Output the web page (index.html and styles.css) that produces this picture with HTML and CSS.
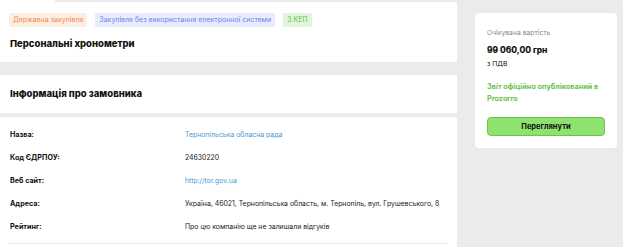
FILE: index.html
```html
<!DOCTYPE html>
<html lang="uk">
<head>
    <meta charset="UTF-8">
    <meta name="viewport" content="width=device-width, initial-scale=1.0">
    <title>Персональні хронометри</title>
    <link rel="stylesheet" href="styles.css">
</head>
<body>

    <div class="page">
        <div class="main-col">
            <div class="tabline"><div class="tab-active"></div></div>

            <div class="card summary">
                <div class="tags">
                    <span class="tag tag-orange">Державна закупівля</span>
                    <span class="tag tag-blue">Закупівля без використання електронної системи</span>
                    <span class="tag tag-green">З КЕП</span>
                </div>
                <h1 class="title">Персональні хронометри</h1>
            </div>

            <div class="card section-head">
                <h2>Інформація про замовника</h2>
            </div>

            <div class="card details">
                <div class="row">
                    <div class="label">Назва:</div>
                    <div class="value"><a href="#">Тернопільська обласна рада</a></div>
                </div>
                <div class="row">
                    <div class="label">Код ЄДРПОУ:</div>
                    <div class="value">24630220</div>
                </div>
                <div class="row">
                    <div class="label">Веб сайт:</div>
                    <div class="value"><a href="#">http://tor.gov.ua</a></div>
                </div>
                <div class="row">
                    <div class="label">Адреса:</div>
                    <div class="value">Україна, 46021, Тернопільська область, м. Тернопіль, вул. Грушевського, 8</div>
                </div>
                <div class="row">
                    <div class="label">Рейтинг:</div>
                    <div class="value">Про цю компанію ще не залишали відгуків</div>
                </div>
                <div class="divider"></div>
            </div>
        </div>

        <div class="side-col">
            <div class="card price-card">
                <div class="price-label">Очікувана вартість</div>
                <div class="price">99 060,00 грн</div>
                <div class="vat">з ПДВ</div>
                <div class="report">Звіт офіційно опублікований в Prozorro</div>
                <button class="view-btn">Переглянути</button>
            </div>
        </div>
    </div>

</body>
</html>
```

FILE: styles.css
```css
body {
    font-family: Inter, "Noto Sans", sans-serif;
    margin: 0;
    padding: 0;
    background-color: #ebebeb;
    color: #111;
}
.page {
    display: flex;
    align-items: flex-start;
    gap: 18px;
}
.main-col {
    width: 457px;
    display: flex;
    flex-direction: column;
}
.tabline {
    height: 2px;
    display: flex;
}
.tab-active {
    width: 55px;
    background-color: white;
}
.card {
    background-color: white;
}
.summary {
    height: 60px;
    padding: 11px 9px 0;
    box-sizing: border-box;
}
.tags {
    display: flex;
    gap: 8px;
}
.tag {
    font-size: 7px;
    line-height: 14px;
    padding: 0 4px;
    border-radius: 2px;
}
.tag-orange {
    background-color: #fdeee4;
    color: #ee8a4f;
}
.tag-blue {
    background-color: #e8ecfd;
    color: #6d84ef;
}
.tag-green {
    background-color: #e0f5dc;
    color: #5cbf48;
}
.title {
    font-size: 9.5px;
    line-height: 14px;
    font-weight: 800;
    margin: 10px 0 0 1px;
}
.section-head {
    margin-top: 13px;
    height: 38px;
    padding: 0 10px 2px;
    box-sizing: border-box;
    display: flex;
    align-items: center;
}
.section-head h2 {
    font-size: 9.5px;
    font-weight: 800;
    margin: 0;
}
.details {
    margin-top: 4px;
    padding: 6px 0 4px;
}
.row {
    display: flex;
    align-items: center;
    height: 23px;
    font-size: 6.9px;
    padding-left: 10px;
}
.label {
    width: 175px;
    font-size: 7.2px;
    font-weight: 700;
}
.value {
    color: #1a1a1a;
}
.value a {
    color: #4a9ad6;
    text-decoration: none;
}
.divider {
    height: 1px;
    background-color: #e6e6e6;
    margin: 5px 10px 0 8px;
}
.side-col {
    width: 142px;
    margin-top: 13px;
}
.price-card {
    padding: 15px 12px 12px;
    border-radius: 4px;
}
.price-label {
    font-size: 6.8px;
    line-height: 10px;
    color: #8a8a8a;
}
.price {
    font-size: 8.4px;
    line-height: 14px;
    font-weight: 800;
    margin-top: 5px;
}
.vat {
    font-size: 6.8px;
    line-height: 10px;
    margin-top: 2px;
}
.report {
    font-size: 7.3px;
    line-height: 12px;
    font-weight: 700;
    color: #6cc24a;
    margin-top: 12px;
}
.view-btn {
    display: block;
    width: 100%;
    height: 19px;
    margin-top: 12px;
    background-color: #8ee36f;
    border: 1px solid #6cc24a;
    border-radius: 4px;
    font-family: inherit;
    font-size: 7.5px;
    font-weight: 700;
    color: #111;
    cursor: pointer;
}
```
